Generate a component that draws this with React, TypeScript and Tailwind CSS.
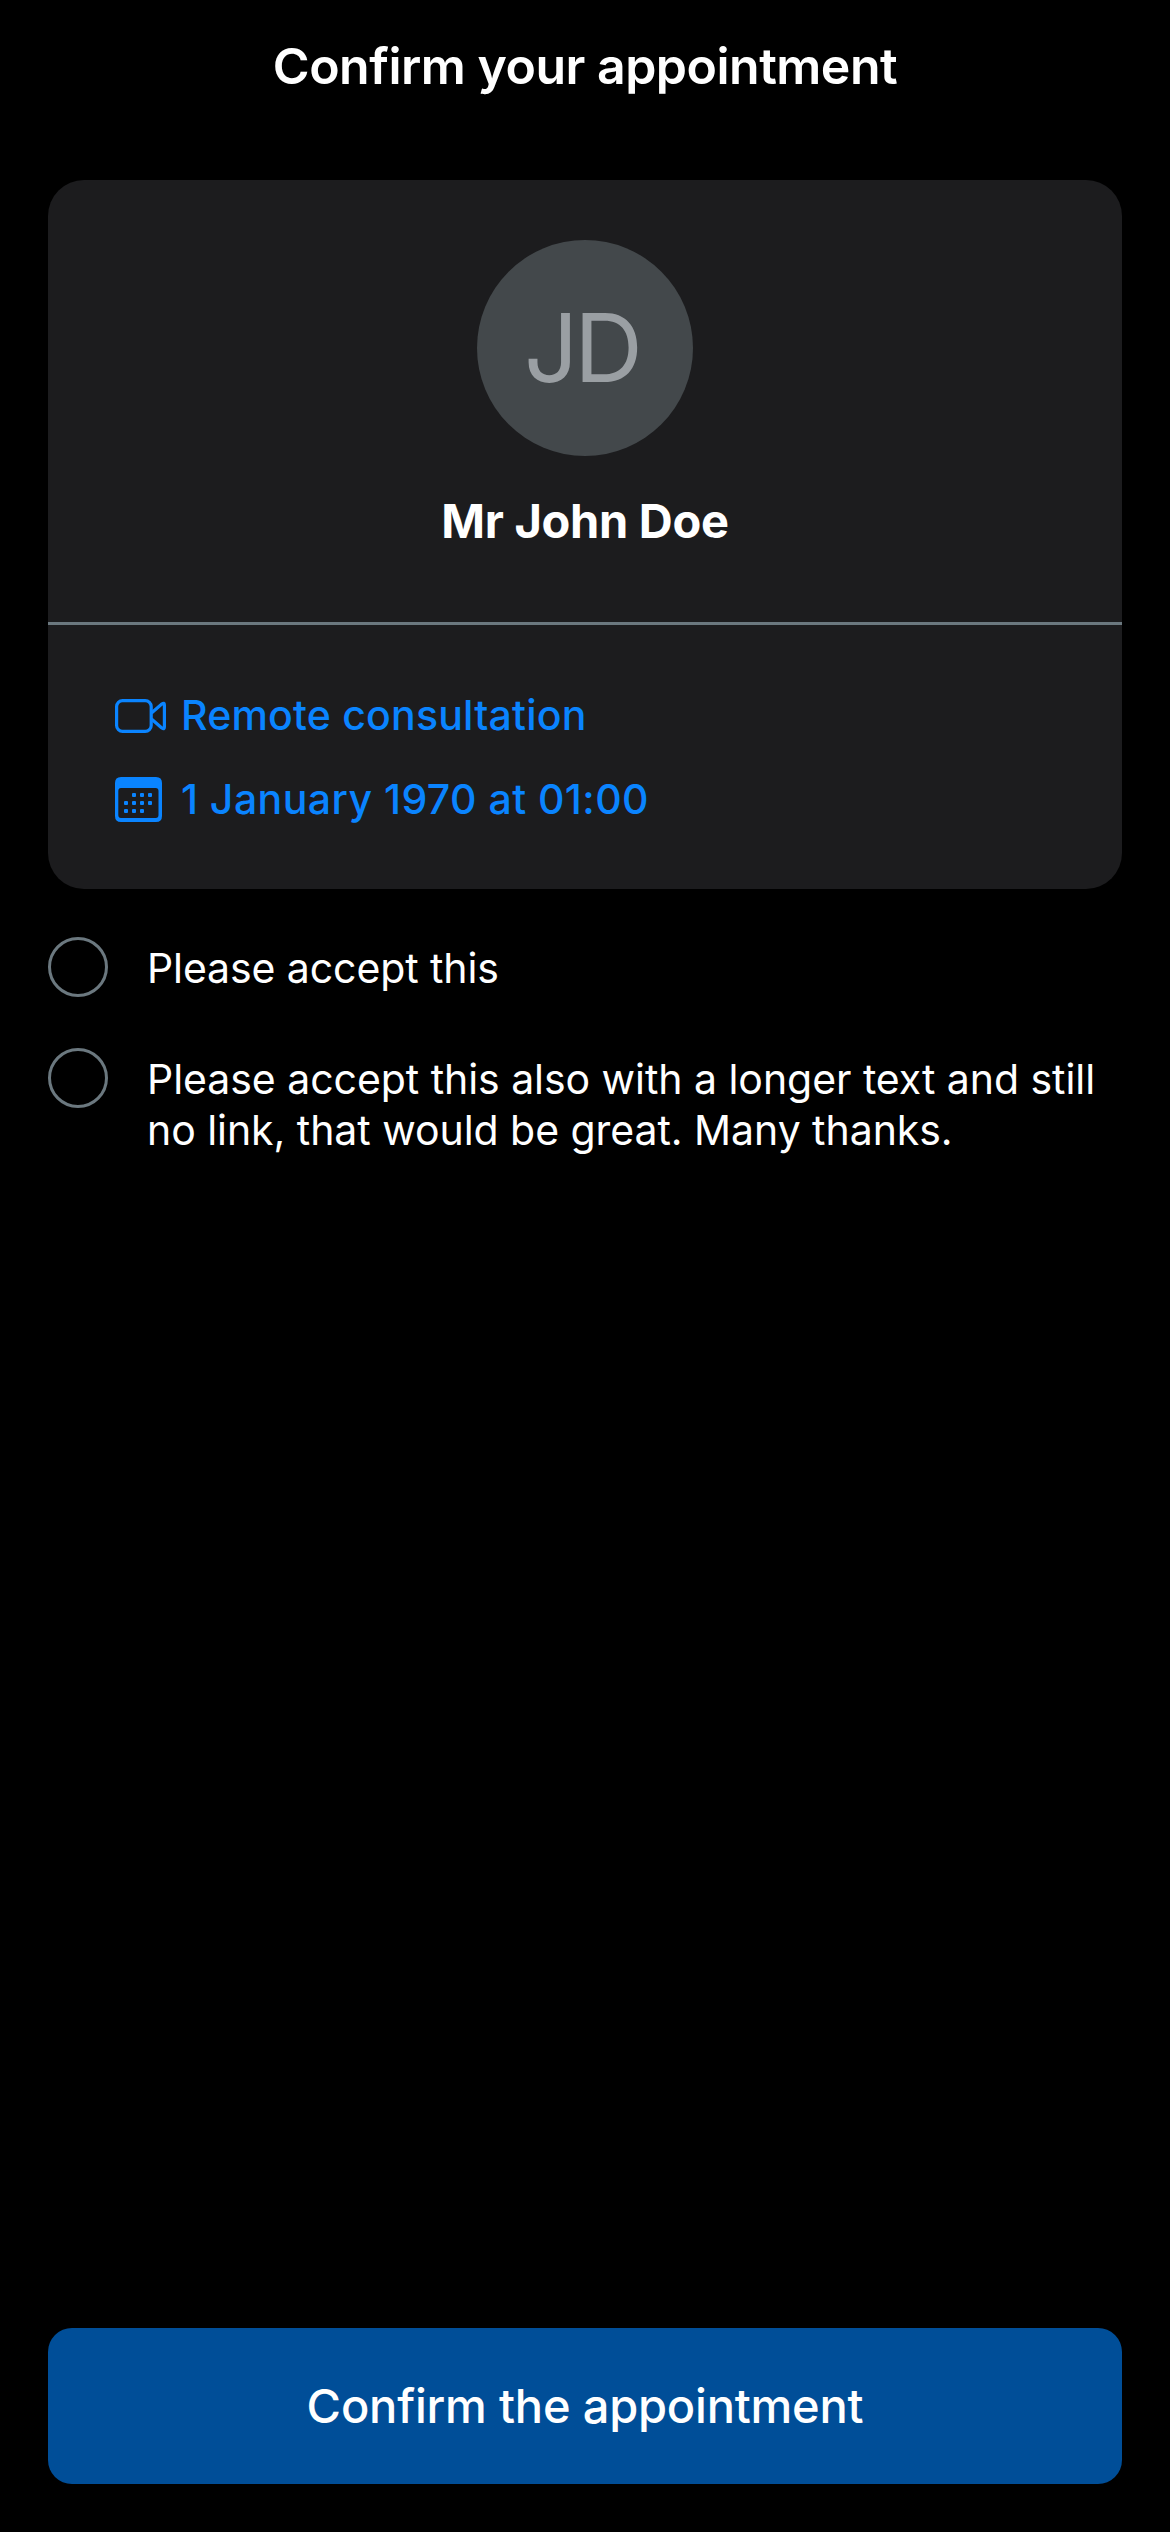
const DOTS = [
  [19, 18], [27, 18], [35, 18],
  [11, 26], [19, 26], [27, 26], [35, 26],
  [11, 34], [19, 34], [27, 34],
];

function VideoIcon() {
  return (
    <svg className="mt-[2px]" width="52" height="34" viewBox="0 0 52 34" fill="none" stroke="currentColor" strokeWidth="3.2" strokeLinejoin="round">
      <rect x="1.6" y="1.6" width="34.6" height="30.8" rx="6" />
      <path d="M36.5 14L46.8 5Q49.4 3.2 49.4 6V28Q49.4 30.8 46.8 29L36.500 20" />
    </svg>
  );
}

function CalendarIcon() {
  return (
    <svg className="mt-[1px]" width="47" height="45" viewBox="0 0 47 45" fill="currentColor">
      <path fillRule="evenodd" d="M6 0H41Q47 0 47 6V39Q47 45 41 45H6Q0 45 0 39V6Q0 0 6 0ZM6 11Q3.300 11 3.300 14V38Q3.300 41 6 41H40.700Q43.500 41 43.500 38V14Q43.500 11 40.700 11Z" />
      {DOTS.map(([x, y]) => (
        <rect key={`${x}-${y}`} x={x - 2} y={y - 2} width="4" height="4" rx="1" />
      ))}
    </svg>
  );
}

export default function App() {
  return (
    <main className="flex h-[2532px] w-[1170px] flex-col bg-black px-12 font-['Inter',sans-serif] text-white">
      <h1 className="mt-[34px] h-[64px] whitespace-nowrap text-center text-[50px] font-semibold leading-[64px] tracking-[-0.5px]">Confirm your appointment</h1>
      <section className="mt-[82px] h-[709px] rounded-[36px] bg-[#1c1c1e]">
        <div className="flex h-[445px] flex-col items-center border-b-[3px] border-[#6b787f] pt-[60px]">
          <div className="flex size-[216px] items-center justify-center rounded-full bg-[#43484b] pr-[7px] pt-[1px] text-[95px] tracking-[-4px] text-[#9a9fa3]">JD</div>
          <h2 className="mt-[33px] text-[47px] font-bold leading-[64px] tracking-[-0.3px]">Mr John Doe</h2>
        </div>
        <div className="flex flex-col gap-[24px] pl-[66px] pt-[60px] text-[41px] font-medium leading-[60px] text-[#0a84ff]">
          <p className="flex items-center tracking-[0.2px]">
            <span className="w-[67px] pl-[1px]"><VideoIcon /></span>
            Remote consultation
          </p>
          <p className="flex items-center tracking-[0.45px]">
            <span className="w-[67px] pl-[1px]"><CalendarIcon /></span>
            1 January 1970 at 01:00
          </p>
        </div>
      </section>
      <label className="mt-[48px] flex h-[60px] text-[41px] tracking-[-0.1px]">
        <span className="size-[60px] rounded-full border-[3px] border-[#6b787f]" />
        <span className="ml-[39px] leading-[62px]">Please accept this</span>
      </label>
      <label className="mt-[51px] flex text-[41px] tracking-[-0.05px]">
        <span className="size-[60px] shrink-0 rounded-full border-[3px] border-[#6b787f]" />
        <span className="ml-[39px] mt-[6px] whitespace-nowrap leading-[51px]">
          Please accept this also with a longer text and still
          <br />
          no link, that would be great. Many thanks.
        </span>
      </label>
      <button className="mb-[48px] mt-auto h-[156px] rounded-[24px] bg-[#004e98] text-[47px] font-medium tracking-[-0.2px]">Confirm the appointment</button>
    </main>
  );
}
